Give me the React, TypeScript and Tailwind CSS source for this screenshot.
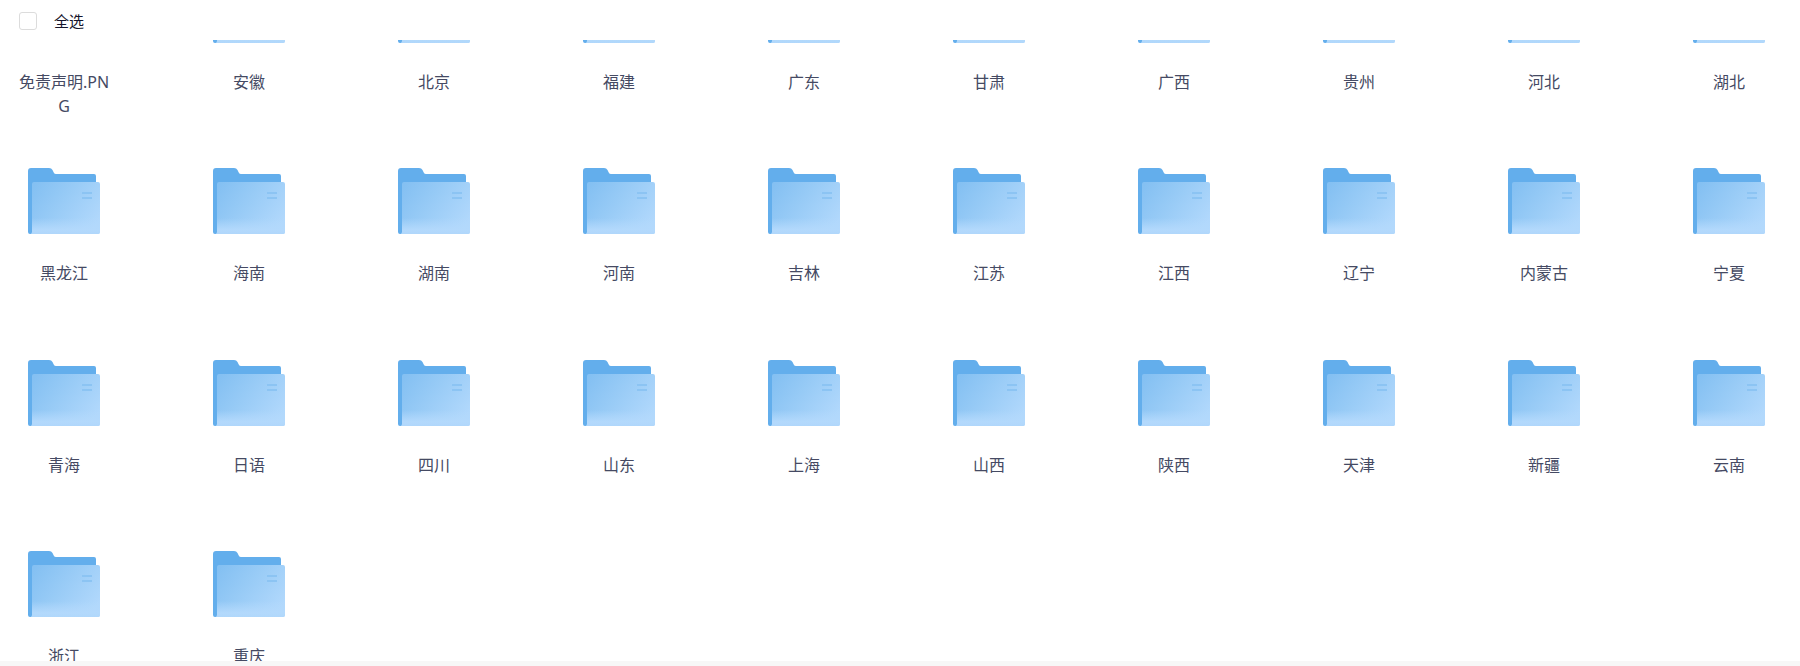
const rows = [
  ["免责声明.PNG", "安徽", "北京", "福建", "广东", "甘肃", "广西", "贵州", "河北", "湖北"],
  ["黑龙江", "海南", "湖南", "河南", "吉林", "江苏", "江西", "辽宁", "内蒙古", "宁夏"],
  ["青海", "日语", "四川", "山东", "上海", "山西", "陕西", "天津", "新疆", "云南"],
  ["浙江", "重庆"],
];
const items = rows.flat();

function Folder({ id }: { id: number }) {
  return (
    <svg width="72" height="66" viewBox="0 0 72 66" className="block">
      <defs>
        <linearGradient id={`f${id}`} x1="0" y1="0.15" x2="1" y2="0.7">
          <stop offset="0" stopColor="#84c0f2" />
          <stop offset="0.45" stopColor="#98cbf6" />
          <stop offset="1" stopColor="#b1d8fc" />
        </linearGradient>
        <linearGradient id={`b${id}`} x1="0" y1="0" x2="0" y2="1">
          <stop offset="0" stopColor="#b3d9fc" stopOpacity="0" />
          <stop offset="0.75" stopColor="#b3d9fc" />
          <stop offset="1" stopColor="#b0d7fb" />
        </linearGradient>
      </defs>
      <path
        d="M3 0H21Q23.5 0 24.5 2L26 5Q26.5 6 28 6H66Q68 6 68 8V60H4V66H2Q0 66 0 64V3Q0 0 3 0Z"
        fill="#63aeec"
      />
      <path
        d="M6 14H70Q72 14 72 16V64Q72 66 70 66H2.5Q4 66 4 64V16Q4 14 6 14Z"
        fill={`url(#f${id})`}
      />
      <path d="M4 50H72V64Q72 66 70 66H2.5Q4 66 4 64Z" fill={`url(#b${id})`} />
      <rect x="54" y="24" width="10" height="2" fill="#8cc4f3" />
      <rect x="54" y="29" width="10" height="2" fill="#8cc4f3" />
    </svg>
  );
}

function Cell({ name, id }: { name: string; id: number }) {
  const isFile = name.includes(".");
  return (
    <div className="flex w-[96px] flex-col items-center">
      {isFile ? <div className="h-[66px] w-[72px]" /> : <Folder id={id} />}
      <div className="mt-[27px] w-full break-all text-center text-[16px] leading-[24px] text-[#454a63]">
        {name}
      </div>
    </div>
  );
}

export default function App() {
  return (
    <div
      className="flex h-[666px] w-[1800px] flex-col overflow-hidden bg-white"
      style={{ fontFamily: '"Noto Sans", "Noto Sans CJK SC", sans-serif' }}
    >
      <div className="flex h-[40px] shrink-0 items-center pl-[19px] pt-[2px]">
        <div className="h-[18px] w-[18px] rounded-[3px] border border-[#dcdcdc] bg-white" />
        <span className="ml-[17px] text-[15px] text-[#15152b]">全选</span>
      </div>
      <div className="min-h-0 flex-1 overflow-hidden">
        <div className="mt-[-63px] grid grid-cols-[repeat(10,96px)] gap-x-[89px] auto-rows-[191.3px] pl-[16px]">
          {items.map((n, i) => (
            <Cell key={n} name={n} id={i} />
          ))}
        </div>
      </div>
      <div className="h-[5px] shrink-0 bg-[#f7f7f7]" />
    </div>
  );
}
